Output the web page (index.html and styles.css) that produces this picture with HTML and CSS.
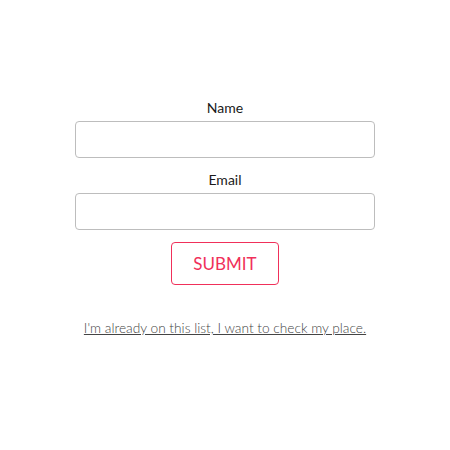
FILE: index.html
```html
<!DOCTYPE html>
<html>
<head>
<meta charset="utf-8">
<link rel="stylesheet" href="styles.css">
</head>
<body>
<div class="page">
  <form class="form">
    <label class="label">Name</label>
    <input class="input" type="text">
    <label class="label label-second">Email</label>
    <input class="input" type="email">
    <button class="submit" type="button">SUBMIT</button>
  </form>
  <a class="check-link" href="#">I'm already on this list, I want to check my place.</a>
</div>
</body>
</html>
```
FILE: styles.css
```css
html, body {
  margin: 0;
  padding: 0;
  background: #ffffff;
}
body {
  font-family: Lato, "Open Sans", sans-serif;
  color: #111;
}
.page {
  width: 300px;
  margin: 0 auto;
  padding-top: 99px;
  display: flex;
  flex-direction: column;
  align-items: center;
}
.form {
  width: 300px;
  display: flex;
  flex-direction: column;
  align-items: center;
}
.label {
  font-size: 14px;
  line-height: 17px;
  color: #1a1a1a;
  margin-bottom: 5px;
}
.label-second {
  margin-top: 13px;
}
.input {
  box-sizing: border-box;
  width: 300px;
  height: 37px;
  border: 1px solid #bdbdbd;
  border-radius: 4px;
  background: #fff;
  margin: 0;
  padding: 0 10px;
  font-family: inherit;
}
.submit {
  margin-top: 12px;
  box-sizing: border-box;
  width: 108px;
  height: 43px;
  border: 1px solid #f0305a;
  border-radius: 4px;
  background: #fff;
  color: #f0305a;
  font-family: Lato, sans-serif;
  font-size: 17px;
  padding: 0;
}
.check-link {
  margin-top: 34px;
  font-size: 13.7px;
  font-weight: 300;
  line-height: 17px;
  color: #444;
  text-decoration: underline;
}
```
